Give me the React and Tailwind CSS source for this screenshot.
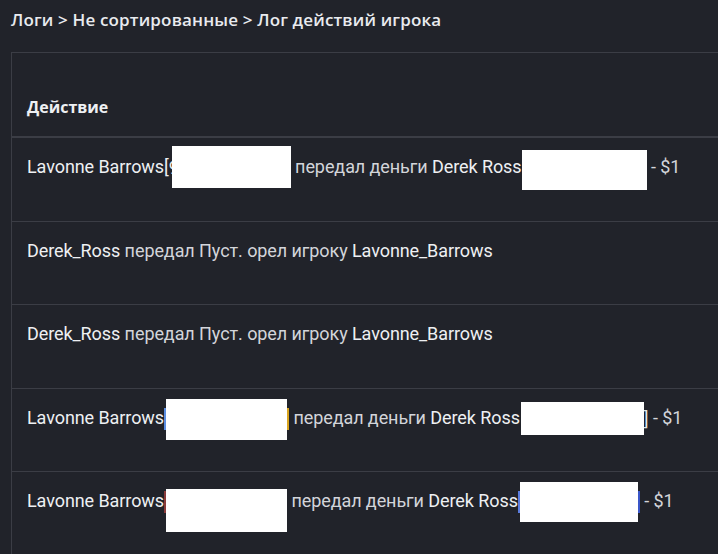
const Box = ({ w, h, dy = 0, before, after }) => (
  <span className="inline-flex items-center align-middle -my-[12px]">
    {before}
    <span
      className="inline-block bg-white"
      style={{ width: w, height: h, transform: `translateY(${dy}px)` }}
    />
    {after}
  </span>
);

const Name = ({ children }) => <span className="text-[#eef0f3]">{children}</span>;
const Txt = ({ children }) => <span className="text-[#d3d5da]">{children}</span>;

const rows = [
  (
    <>
      <Name>Lavonne Barrows[</Name>
      <Box
        w={119}
        h={42}
        dy={-1}
        before={<span className="inline-block w-[3px] overflow-hidden text-[#e6e8ec]">9</span>}
      />
      <Txt> передал деньги </Txt>
      <Name>Derek Ross</Name>
      <Box w={125} h={40} dy={2} />
      <Txt> - $1</Txt>
    </>
  ),
  (
    <>
      <Name>Derek_Ross</Name>
      <Txt> передал Пуст. орел игроку </Txt>
      <Name>Lavonne_Barrows</Name>
    </>
  ),
  (
    <>
      <Name>Derek_Ross</Name>
      <Txt> передал Пуст. орел игроку </Txt>
      <Name>Lavonne_Barrows</Name>
    </>
  ),
  (
    <>
      <Name>Lavonne Barrows</Name>
      <Box
        w={121}
        h={41}
        dy={1}
        before={<span className="inline-block w-[2px] h-[22px] bg-[#5b8de0]" />}
        after={<span className="inline-block w-[2px] h-[22px] bg-[#d9a520]" />}
      />
      <Txt> передал деньги </Txt>
      <Name>Derek Ross</Name>
      <Box
        w={123}
        h={33}
        dy={0}
        before={<span className="inline-block w-[1px]" />}
        after={<span className="text-[#e6e8ec]">]</span>}
      />
      <Txt> - $1</Txt>
    </>
  ),
  (
    <>
      <Name>Lavonne Barrows</Name>
      <Box
        w={121}
        h={43}
        dy={8}
        before={<span className="inline-block w-[2px] h-[22px] bg-[#8a3b3b]" />}
      />
      <Txt> передал деньги </Txt>
      <Name>Derek Ross</Name>
      <Box
        w={118}
        h={40}
        dy={0}
        before={<span className="inline-block w-[2px] h-[22px] bg-[#5b7de0]" />}
        after={<span className="inline-block w-[2px] h-[22px] bg-[#3a56c8]" />}
      />
      <Txt> - $1</Txt>
    </>
  ),
];

export default function App() {
  return (
    <div className="w-[718px] h-[554px] overflow-hidden bg-[#21232a] font-['Roboto',sans-serif]">
      <div className="px-[11px] pt-[8px] h-[52px] text-[17px] leading-6 font-semibold tracking-[0.15px] text-[#e9ebef] font-['Open_Sans',sans-serif]">
        Логи &gt; Не сортированные &gt; Лог действий игрока
      </div>
      <div className="ml-[11px] w-[760px] border border-[#3b3d45] border-b-0">
        <div className="h-[85px] flex items-end pl-[15px] pb-[17px] border-b-2 border-[#3b3d45] text-[16px] font-bold text-[#eef0f3] font-['Open_Sans',sans-serif]">
          Действие
        </div>
        {rows.map((r, i) => (
          <div
            key={i}
            className="h-[83.5px] pl-[15px] pt-[17px] border-b border-[#3b3d45] text-[18px] leading-6 tracking-[-0.08px] whitespace-nowrap"
          >
            {r}
          </div>
        ))}
      </div>
    </div>
  );
}
